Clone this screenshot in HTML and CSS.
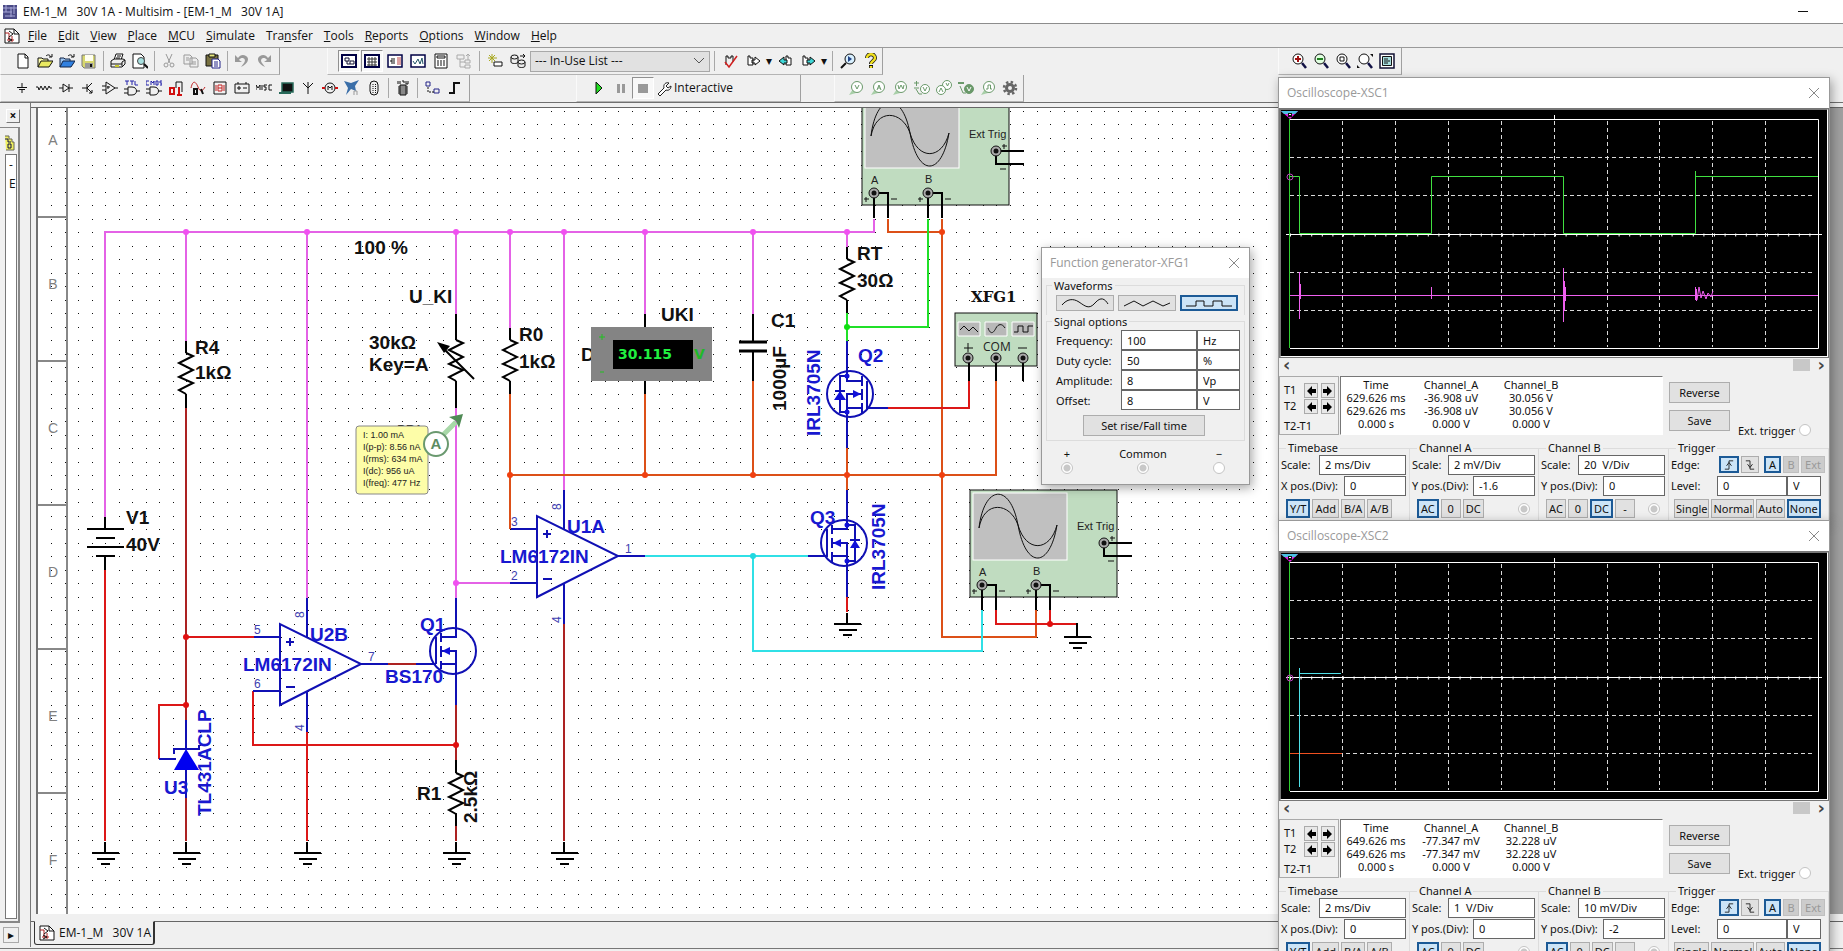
FILE: index.html
```html
<!DOCTYPE html>
<html lang="en">
<head>
<meta charset="utf-8">
<title>EM-1_M 30V 1A - Multisim</title>
<link rel="stylesheet" href="styles.css">
</head>
<body>
<svg class="defs" aria-hidden="true">
  <defs>
    <pattern id="dots" x="51" y="111" width="27" height="27" patternUnits="userSpaceOnUse"><path fill="#111" d="M0 0h1v1h-1zM14 0h1v1h-1zM0 13h1v1h-1zM14 13h1v1h-1z"/></pattern>
    <path id="res" d="M0 0l7 3-14 7 14 7-14 7 14 6-14 7 7 4"/>
    <path id="gnd" d="M0-11V0M-13 0h27M-8 6h18M-4 11h9"/>
    <g id="opamp">
      <path class="blue" d="M0-40V41L81 0ZM-26-27H0M-27 27H0M27-66V-27M27 27V68M81 0H108M6-22h8M10-26v8M6 23h9"/>
      <text class="pin" transform="translate(24 -46) rotate(-90)">8</text>
      <text class="pin" transform="translate(24 67) rotate(-90)">4</text>
    </g>
    <g id="jack"><circle r="5" fill="#aaa" stroke="#111"/><circle r="2.5" fill="#111"/></g>
    <g id="scopebox">
      <rect x="970" y="490" width="147" height="107" fill="#c0dcc0" stroke="#111"/>
      <rect x="973" y="493" width="94" height="67" fill="#c0c0c0" stroke="#fff"/>
      <path class="thin" d="M979 528C984 485 1010 482 1018 525C1026 570 1050 568 1057 525M979 528C984 500 1010 502 1018 525C1026 553 1050 552 1057 525"/>
      <text class="small" x="1077" y="530">Ext Trig</text><text class="small" x="979" y="576">A</text><text class="small" x="1033" y="575">B</text>
      <path class="blk" d="M1104 543H1132M1104 543V556H1132M982 585V610M982 585H996V610M1036 585V610M1036 585H1050V610"/>
      <path class="thin" d="M1110 538h5M1112 536v5M1108 561h6M972 591h5M974 589v5M999 591h6M1026 591h5M1028 589v5M1053 591h6"/>
      <use href="#jack" x="1104" y="543"/><use href="#jack" x="982" y="585"/><use href="#jack" x="1036" y="585"/>
    </g>
    <g id="graticule">
      <path class="dash" d="M63.500 12V238M116.500 12V238M169.500 12V238M222.500 12V238M275.500 12V238M328.500 12V238M380.500 12V238M433.500 12V238M486.500 12V238M11 48.500H536M11 86.500H536M11 163.500H536M11 201.500H536"/>
      <path stroke="#fff" fill="none" d="M11 10.500H539.500V239.500H11M7 125.500H543M275.500 6V11"/>
      <path stroke="#fff" stroke-width="3" stroke-dasharray="1 9.600" d="M11 126H539"/>
      <path d="M2 2H19L11 10Z" fill="#e020e0"/><path d="M2 2H19L16 5H5Z" fill="#4ac0e0"/><path d="M9 4h4v4h-4z" fill="#111"/><path d="M10 5h2v1h-2z" fill="#fff"/>
      <path d="M10.500 10V239" stroke="#30d030"/>
    </g>
    <path id="closex" d="M1 1L11 11M11 1L1 11"/>
    <g id="larr"><path d="M1 5L6 0V3H10V7H6V10Z"/></g>
    <g id="probe"><path d="M1 15L5 9 8 13Z" fill="#a8cfa8" stroke="none"/><circle cx="9" cy="7" r="5.500" fill="#fff"/></g>
  </defs>
</svg>

<header class="titlebar">
  <svg class="ic" viewBox="0 0 16 16"><path fill="#4a4a86" d="M1 1h14v14H1z"/><path stroke="#a8a8d8" d="M1 4h14M1 8h9M3 12h10M4 1v7M9 3v10M12 1v9"/></svg>
  <h1>EM-1_M   30V 1A - Multisim - [EM-1_M   30V 1A]</h1>
  <button class="minimize" aria-label="Minimize"></button>
</header>

<nav class="menu">
  <svg class="ic" viewBox="0 0 16 16"><path d="M1 1h9l5 5v9H1z" fill="#fff" stroke="#111"/><path d="M10 1v5h5" fill="none" stroke="#111"/><path d="M1 5h4v7h5M3 12h3M8 8v6" stroke="#b02020" fill="none"/><path d="M5 3l4 3-4 3M4 10l4 2-4 2" stroke="#111" fill="none"/></svg>
  <a href="#"><u>F</u>ile</a><a href="#"><u>E</u>dit</a><a href="#"><u>V</u>iew</a><a href="#"><u>P</u>lace</a><a href="#"><u>M</u>CU</a><a href="#"><u>S</u>imulate</a><a href="#">Tra<u>n</u>sfer</a><a href="#"><u>T</u>ools</a><a href="#"><u>R</u>eports</a><a href="#"><u>O</u>ptions</a><a href="#"><u>W</u>indow</a><a href="#"><u>H</u>elp</a>
</nav>

<div class="toolrow">
  <div class="group g-file">
    <button aria-label="New"><svg viewBox="0 0 16 16"><path d="M3 1h7l3 3v11H3z" fill="#fff" stroke="#111"/><path d="M10 1v4h3" fill="none" stroke="#111"/></svg></button>
    <button aria-label="Open"><svg viewBox="0 0 16 16"><path d="M1 14V5h4l1 1h5v3" fill="#ffffb0" stroke="#111"/><path d="M1 14l3-6h12l-4 6z" fill="#e8e860" stroke="#111"/><path d="M9 3c2-2 4-1 5 1M15 1v3h-3" fill="none" stroke="#111"/></svg></button>
    <button aria-label="Open samples"><svg viewBox="0 0 16 16"><path d="M1 14V5h4l1 1h5v3" fill="#9cc4f0" stroke="#124"/><path d="M1 14l3-6h12l-4 6z" fill="#3080e0" stroke="#124"/><path d="M9 3c2-2 4-1 5 1M15 1v3h-3" fill="none" stroke="#111"/></svg></button>
    <button aria-label="Save"><svg viewBox="0 0 16 16"><path d="M1 2h13v13H3l-2-2z" fill="#d8d870" stroke="#777"/><path d="M4 2h8v6H4z" fill="#fffff0"/><path d="M4 10h8v5H4z" fill="#999"/><path d="M9 11h2v3H9z" fill="#111"/></svg></button>
    <i></i>
    <button aria-label="Print"><svg viewBox="0 0 16 16"><path d="M4 7l2-6h7l-2 6" fill="#fff" stroke="#111"/><path d="M1 8l3-2h9l2 1v4l-3 3H1z" fill="#eee" stroke="#111"/><path d="M7 3h4M6 5h4M1 11h11M12 13V9l3-2" stroke="#111" fill="none"/><path d="M5 12h4v2H5z" fill="#c8c830"/></svg></button>
    <button aria-label="Print preview"><svg viewBox="0 0 16 16"><path d="M1 1h8l3 3v11H1z" fill="#fff" stroke="#111"/><circle cx="9" cy="8" r="3.500" fill="#a8e0e0" stroke="#444"/><path d="M12 11l4 4" stroke="#111" stroke-width="2"/></svg></button>
    <i></i>
    <button aria-label="Cut"><svg viewBox="0 0 16 16" fill="none" stroke="#999"><path d="M5 1l4 9M11 1L7 10"/><circle cx="5" cy="12" r="2"/><circle cx="11" cy="12" r="2"/></svg></button>
    <button aria-label="Copy"><svg viewBox="0 0 16 16" fill="#eee" stroke="#999"><path d="M1 2h6l2 2v7H1zM7 5h6l2 2v7H7z"/><path d="M3 5h3M3 7h3M9 9h4M9 11h4"/></svg></button>
    <button aria-label="Paste"><svg viewBox="0 0 16 16"><path d="M1 2h12v11H1z" fill="#777040" stroke="#111"/><path d="M4 1h6v3H4z" fill="#e8e880" stroke="#111"/><path d="M7 6h6l2 2v7H7z" fill="#fff" stroke="#228"/><path d="M9 9h4M9 11h4M9 13h4" stroke="#228"/></svg></button>
    <i></i>
    <button aria-label="Undo"><svg viewBox="0 0 16 16"><path d="M1 2v7h7L5 7c3-4 8-1 5 3l-3 4c7-3 9-9 5-11C9 1 6 2 4 5z" fill="#999"/></svg></button>
    <button aria-label="Redo"><svg viewBox="0 0 16 16"><path d="M15 2v7H8l3-2c-3-4-8-1-5 3l3 4C2 11 0 5 4 3c3-2 6-1 8 2z" fill="#999"/></svg></button>
  </div>
  <div class="group g-main">
    <button class="down" aria-label="Design toolbox"><svg viewBox="0 0 16 16"><path d="M1 2h14v12H1z" fill="#fff" stroke="#004" stroke-width="2"/><path d="M4 5h4v3H4zM9 8h4v3H9zM6 8v3h3" fill="none" stroke="#113"/></svg></button>
    <button class="down" aria-label="Spreadsheet"><svg viewBox="0 0 16 16"><path d="M1 2h14v12H1z" fill="#fff" stroke="#004" stroke-width="2"/><path d="M3 6h10M3 9h10M3 12h10M5 4v9M8 4v9M11 4v9" stroke="#333"/></svg></button>
    <button aria-label="Netlist"><svg viewBox="0 0 16 16"><path d="M1 2h14v12H1z" fill="#fff" stroke="#004" stroke-width="1.500"/><path d="M3 8h2M5 5v6M7 5v6" stroke="#111"/><path d="M10 5h4M10 7h4M10 9h4M10 11h4" stroke="#b44"/></svg></button>
    <button aria-label="Grapher"><svg viewBox="0 0 16 16"><path d="M1 2h14v12H1z" fill="#fff" stroke="#004" stroke-width="1.500"/><path d="M3 8l2 3 3-5 2 5 2-6 1 6" fill="none" stroke="#256"/></svg></button>
    <button aria-label="Postprocessor"><svg viewBox="0 0 16 16"><path d="M2 1h12v14H2z" fill="#fff" stroke="#111"/><path d="M4 3h8v2H4zM4 8h2M7 8h2M10 8h2M4 10h2M7 10h2M10 10h2M4 12h2M7 12h2M10 12h2" stroke="#111" fill="none"/></svg></button>
    <button aria-label="Parent sheet"><svg viewBox="0 0 16 16" fill="none" stroke="#aaa"><path d="M1 2h7v4H1zM9 7h5v3H9zM9 12h5v3H9zM4 6v8h5M4 9h5M12 7V1M10 3l2-2 2 2"/></svg></button>
    <i></i>
    <button aria-label="Create component"><svg viewBox="0 0 16 16"><path d="M7 9h8v4H7z" fill="#fff" stroke="#111"/><path d="M5 1v9M1 5h9M2 2l6 6M8 2L2 8" stroke="#a8a820"/></svg></button>
    <button aria-label="Database"><svg viewBox="0 0 16 16" fill="#eee" stroke="#111"><path d="M1 4v5c0 2 7 2 7 0V4"/><ellipse cx="4.500" cy="4" rx="3.500" ry="2"/><path d="M8 9v4c0 2 7 2 7 0V9"/><ellipse cx="11.500" cy="9" rx="3.500" ry="2"/><path d="M10 3h5M13 1l2 2-2 2"/></svg></button>
    <select aria-label="In-use list"><option>--- In-Use List ---</option></select>
    <i></i>
    <button aria-label="Electrical rules check"><svg viewBox="0 0 16 16" fill="none"><path d="M4 12V3h2v2h3V3h2v6" stroke="#111"/><path d="M3 9l4 5 8-11" stroke="#d02020" stroke-width="1.500"/></svg></button>
    <button aria-label="Transfer"><svg viewBox="0 0 16 16" fill="#fff" stroke="#111"><path d="M3 3h2v2h3v7H3zM7 7h3V4l5 4-5 4v-2H7z"/></svg></button>
    <b>▾</b>
    <button aria-label="Back annotate"><svg viewBox="0 0 16 16" stroke="#111"><path d="M9 3h2v2h3v7H9z" fill="#fff"/><path d="M10 7H7V4L2 8l5 4v-2h3z" fill="#40d8d8"/></svg></button>
    <button aria-label="Forward annotate"><svg viewBox="0 0 16 16" stroke="#111"><path d="M3 3h2v2h3v7H3z" fill="#fff"/><path d="M7 7h3V4l5 4-5 4v-2H7z" fill="#40d8d8"/></svg></button>
    <b>▾</b>
    <i></i>
    <button aria-label="Find examples"><svg viewBox="0 0 16 16"><circle cx="10" cy="6" r="5" fill="#d8f0ff" stroke="#111"/><path d="M6 10l-5 5" stroke="#111" stroke-width="2"/><path d="M8 3l4 3-4 3z" fill="#248"/></svg></button>
    <button aria-label="Help"><svg viewBox="0 0 16 16"><path d="M4 5c0-5 8-5 8 0 0 3-4 3-4 6M8 12v3" fill="none" stroke="#111" stroke-width="4"/><path d="M4 5c0-5 8-5 8 0 0 3-4 3-4 6M8 13v2" fill="none" stroke="#f0e020" stroke-width="2.500"/></svg></button>
  </div>
  <div class="group g-zoom">
    <button aria-label="Zoom in"><svg viewBox="0 0 16 16"><circle cx="7" cy="6" r="5" fill="#fff" stroke="#111"/><path d="M7 3v6M4 6h6" stroke="#a01010" stroke-width="2"/><path d="M11 10l4 5" stroke="#114" stroke-width="2.500"/></svg></button>
    <button aria-label="Zoom out"><svg viewBox="0 0 16 16"><circle cx="7" cy="6" r="5" fill="#e0ffe0" stroke="#111"/><path d="M4 6h6" stroke="#208020" stroke-width="2"/><path d="M11 10l4 5" stroke="#114" stroke-width="2.500"/></svg></button>
    <button aria-label="Zoom area"><svg viewBox="0 0 16 16"><circle cx="7" cy="6" r="5" fill="#fff" stroke="#111"/><path d="M5 4h4v4H5z" fill="none" stroke="#111"/><path d="M11 10l4 5" stroke="#114" stroke-width="2.500"/></svg></button>
    <button aria-label="Zoom sheet"><svg viewBox="0 0 16 16"><circle cx="7" cy="6" r="5" fill="#fff" stroke="#111"/><path d="M11 10l4 5" stroke="#114" stroke-width="2.500"/><path d="M13 1h3v3zM0 12v3h3z" fill="#111"/></svg></button>
    <button aria-label="Full screen"><svg viewBox="0 0 16 16"><path d="M1 1h14v14H1z" fill="#fff" stroke="#113" stroke-width="1.500"/><path d="M3.500 3.500h9v9h-9z" fill="#a8e0e0" stroke="#111"/><path d="M5 6h4M5 8h6M5 10h4" stroke="#111"/></svg></button>
  </div>
</div>
<div class="toolrow">
  <div class="group g-comp">
    <button aria-label="Source"><svg viewBox="0 0 16 16" stroke="#111"><path d="M8 3v4M3 7.500h10M5 9.500h6M8 10v3"/></svg></button>
    <button aria-label="Basic"><svg viewBox="0 0 16 16" fill="none" stroke="#111"><path d="M0 7h2l1 3 2-4 2 4 2-4 2 4 2-4 1 2h2"/></svg></button>
    <button aria-label="Diode"><svg viewBox="0 0 16 16" fill="none" stroke="#111"><path d="M1 8h4M5 4v8l6-4zM11 4v8M11 8h4"/></svg></button>
    <button aria-label="Transistor"><svg viewBox="0 0 16 16" fill="none" stroke="#111"><path d="M2 8h5M7 4v8M7 8l5-5M7 8l5 5M12 10v3h-3"/></svg></button>
    <button aria-label="Analog"><svg viewBox="0 0 16 16" fill="none" stroke="#111"><path d="M4 2v12l9-6zM0 6h4M0 10h4M13 8h3M6 6v3M5 7h3"/></svg></button>
    <button aria-label="TTL"><svg viewBox="0 0 16 16" fill="none" stroke="#111"><path d="M4 7v8h4c6 0 6-8 0-8zM0 9h4M0 13h4M13 11h3"/><path d="M1 1h4M3 1v4M6 1h4M8 1v4M11 1v4h3" stroke="#22a"/></svg></button>
    <button aria-label="CMOS"><svg viewBox="0 0 16 16" fill="none" stroke="#111"><path d="M4 7v8h4c6 0 6-8 0-8zM0 9h4M0 13h4M13 11h3"/><path d="M3 1H0v4h3M5 5V1l2 2 1-2v4M10 1h2v4h-2zM16 1h-2v2h2v2h-2" stroke="#22a"/></svg></button>
    <button aria-label="Misc digital"><svg viewBox="0 0 16 16" fill="none"><path d="M8 2h6v10M8 2v6" stroke="#111"/><path d="M2 8h4v6H2zM11 7v8M9 15h5" stroke="#d01010" stroke-width="2"/></svg></button>
    <button aria-label="Mixed"><svg viewBox="0 0 16 16" fill="none"><path d="M1 8c2-9 5-6 7-1s4 5 7 0" stroke="#c02020"/><path d="M4 9h3v5H4zM11 9l2 5" stroke="#111" stroke-width="2"/></svg></button>
    <button aria-label="Indicator"><svg viewBox="0 0 16 16" fill="none"><path d="M2 2h12v12H2z" stroke="#111"/><path d="M6 5h4v6H6zM6 8h4M4 5v6M12 5v6" stroke="#c02020"/></svg></button>
    <button aria-label="Power"><svg viewBox="0 0 16 16" fill="none" stroke="#111"><path d="M1 4h14v9H1zM4 4V2M12 4V2M3 8h4M9 8h4M5 6v4"/></svg></button>
    <button aria-label="Miscellaneous"><svg viewBox="0 0 16 16" fill="none" stroke="#111"><path d="M0 10V5l2 3 2-3v5M6 5v5M11 5H8v2h2v3H8M16 5h-3v5h3"/></svg></button>
    <button aria-label="Advanced peripherals"><svg viewBox="0 0 16 16"><path d="M4 3h11v9H4z" fill="#111" stroke="#286a5a" stroke-width="1.500"/><path d="M1 13h12" stroke="#286a5a" stroke-width="2"/></svg></button>
    <button aria-label="RF"><svg viewBox="0 0 16 16" fill="none" stroke="#111"><path d="M8 2v12M3 3l5 5 5-5"/></svg></button>
    <button aria-label="Electromechanical"><svg viewBox="0 0 16 16" fill="none" stroke="#111"><circle cx="8" cy="8" r="5"/><path d="M6 10V6l2 2 2-2v4"/><path d="M0 8h3M13 8h3" stroke="#d01010" stroke-width="2"/></svg></button>
    <button aria-label="NI component"><svg viewBox="0 0 16 16"><path d="M0 1l7 2 8-3-4 6 1 5-5-2-5 6 2-7z" fill="#3a6ea8"/><path d="M10 15v-4h3v4" fill="none" stroke="#999"/></svg></button>
    <button aria-label="Connector"><svg viewBox="0 0 16 16" fill="none" stroke="#111"><rect x="4" y="1" width="8" height="14" rx="4"/><path d="M7 4v9M9.500 4v9" stroke-dasharray="1 1"/></svg></button>
    <i></i>
    <button aria-label="MCU"><svg viewBox="0 0 16 16"><path d="M5 5h6v10H5z" fill="#888" stroke="#111"/><path d="M3 7h2M3 9h2M3 11h2M3 13h2M11 7h2M11 9h2M11 11h2M11 13h2M3 1v3M5 1v3M7 1h2v2M11 1v3h2V1" stroke="#111" fill="none"/></svg></button>
    <i></i>
    <button aria-label="Hierarchical block"><svg viewBox="0 0 16 16" fill="none" stroke="#228"><path d="M2 2h4v4H2zM10 9h5v4h-5z"/><path d="M4 7v5h6" stroke="#111" stroke-dasharray="2 1"/></svg></button>
    <button aria-label="Bus"><svg viewBox="0 0 16 16" fill="none" stroke="#111" stroke-width="2"><path d="M3 13h5V3h6"/></svg></button>
  </div>
  <div class="group g-sim">
    <button aria-label="Run"><svg viewBox="0 0 16 16"><path d="M5 2l6 6-6 6z" fill="#20e020" stroke="#111"/></svg></button>
    <button aria-label="Pause"><svg viewBox="0 0 16 16"><path d="M4 4h3v9H4zM9 4h3v9H9z" fill="#999"/></svg></button>
    <button class="down" aria-label="Stop"><svg viewBox="0 0 16 16"><path d="M3 4h10v9H3z" fill="#999"/></svg></button>
    <button class="wide"><svg viewBox="0 0 16 16"><path d="M2 14l6-6c-1-4 2-6 5-5l-3 3 2 2 3-2c0 3-2 5-5 4l-6 6z" fill="#fff" stroke="#222"/></svg>Interactive</button>
  </div>
  <div class="group g-probe">
    <button aria-label="Voltage probe"><svg class="pr" viewBox="0 0 16 16"><use href="#probe"/><path d="M7 5l2 4 2-4"/></svg></button>
    <button aria-label="Current probe"><svg class="pr" viewBox="0 0 16 16"><use href="#probe"/><path d="M7 10l2-5 2 5M8 8h2"/></svg></button>
    <button aria-label="Power probe"><svg class="pr" viewBox="0 0 16 16"><use href="#probe"/><path d="M6 5l1 4 2-4 2 4 1-4"/></svg></button>
    <button aria-label="Differential probe"><svg class="pr" viewBox="0 0 16 16"><path d="M0 3h5M2.500 1v5M0 8h5"/><circle cx="11" cy="9" r="4.500" fill="#fff"/><path d="M9 7l2 4 2-4M2 9l3 5h3"/></svg></button>
    <button aria-label="Voltage and current probe"><svg class="pr" viewBox="0 0 16 16"><circle cx="11" cy="5" r="4.500" fill="#fff"/><circle cx="5" cy="10" r="4.500" fill="#fff"/><path d="M3 12l2-4 2 4M10 3l1.500 3 1.500-3"/></svg></button>
    <button aria-label="Reference probe"><svg class="pr" viewBox="0 0 16 16"><path d="M0 3h6" stroke-width="2"/><circle cx="11" cy="9" r="4.500" fill="#6a996a"/><path d="M9 7l2 4 2-4" stroke="#fff"/><path d="M2 6l3 7h3"/></svg></button>
    <button aria-label="Digital probe"><svg class="pr" viewBox="0 0 16 16"><use href="#probe"/><path d="M6 9h2V5h2.500v4H12"/></svg></button>
    <button aria-label="Probe settings"><svg viewBox="0 0 16 16" fill="none" stroke="#666"><circle cx="8" cy="8" r="3.500" stroke-width="3"/><circle cx="8" cy="8" r="6" stroke-width="2.500" stroke-dasharray="2.400 2.300"/></svg></button>
  </div>
</div>

<main>
  <aside class="dock">
    <div class="dockhead"><button aria-label="Close toolbox">×</button></div>
    <div class="dockpane">
      <svg class="sheets" viewBox="0 0 10 18"><path d="M0 2h4v3h3v3h2v8H1" fill="#f0f060" stroke="#665"/><path d="M0 5h3v3h3M3 10v4h3v-4z" fill="none" stroke="#114"/></svg>
      <div class="tree"><span>-</span><span>E</span></div>
    </div>
    <button class="dockscroll" aria-label="Scroll right">▸</button>
  </aside>
  <section class="work">
    <div class="desk">
      <div class="sheet">
<svg class="schematic" role="img" aria-label="Schematic EM-1_M">
<g transform="translate(-38 -108)">
  <rect x="50" y="110" width="1222" height="806" fill="url(#dots)"/>
  <path class="rule" d="M67 100V920M38 217H67M38 361H67M38 505H67M38 649H67M38 793H67"/>
  <g class="zone"><text x="53" y="145">A</text><text x="53" y="289">B</text><text x="53" y="433">C</text><text x="53" y="577">D</text><text x="53" y="721">E</text><text x="53" y="865">F</text></g>

  <use href="#scopebox"/><use href="#scopebox" x="-108" y="-392"/>
  <path class="mag" d="M105 517V232H874V219M186 232V341M307 232V598M456 232V314M456 408V598M456 583H511M510 232V328M564 232V490M645 232V314M753 232V314M847 232V247"/>
  <path class="org" d="M510 394V529M510 475H996V381M645 394V475M753 381V475M847 448V490M888 219V232H942M942 219V637H1036V610"/>
  <path class="grn" d="M928 219V327H847M847 313V341"/>
  <path class="cyn" d="M645 556H808M753 556V651H982V610"/>
  <path class="drd" d="M186 408V720M186 798V841M564 624V841M388 664H416M456 705V760M456 826V841"/>
  <path class="red" d="M105 570V841M307 732V841M186 637H254M186 705H159V759M253 691V745H456M888 408H969V381M847 597V612M996 610V624H1077M1050 610V624"/>
  <path class="blk" d="M105 517V529M87 529H124M96 538H115M87 547H124M96 556H115M105 556V570M186 341V353M186 394V408M456 314V340M456 381V408M456 760V773M456 814V826M510 328V340M510 381V394M645 314V327M645 381V394M753 314V342M753 351V381M847 247V259M847 300V313M1077 623V627"/>
  <path class="blk cap" d="M739 342H767M739 351H767"/>
  <g class="blk"><use href="#res" x="186" y="353"/><use href="#res" x="456" y="340"/><use href="#res" x="510" y="340"/><use href="#res" x="847" y="259"/><use href="#res" x="456" y="773"/>
  <use href="#gnd" x="105" y="853"/><use href="#gnd" x="186" y="853"/><use href="#gnd" x="307" y="853"/><use href="#gnd" x="456" y="853"/><use href="#gnd" x="564" y="853"/><use href="#gnd" x="847" y="624"/><use href="#gnd" x="1077" y="637"/>
  <path d="M440 345L474 379"/></g><path d="M437 342l13 4-6 7z" fill="#000"/>

  <use href="#opamp" x="280" y="664"/><use href="#opamp" x="537" y="556"/>
  <path class="blue" d="M416 664H436M436 637V664M441 633V642M441 646V657M441 661V669M441 637H456V598M441 664H456M441 651H456V705"/>
  <circle class="blue" cx="453" cy="651" r="23"/><path class="bf" d="M442 651l8-4v8z"/>
  <path class="blue" d="M159 759H176M186 720V749M174 754V749H199V745M186 769V798"/><path d="M186 749l13 21h-25z" fill="#0000f0"/>
  <circle class="blue" cx="850" cy="394" r="23"/>
  <path class="blue" d="M847 341V381H862M847 376H840V412H847M835 391H845M862 376V386M862 389V400M862 403V413M867 381V408H888M862 394H847V448M862 408H847"/><path class="bf" d="M840 391l6 9h-12zM861 394l-8-4v8z"/>
  <circle class="blue" cx="844" cy="543" r="23"/>
  <path class="blue" d="M847 490V529H832M847 525H855V561H847M850 540H860M832 525V534M832 538V548M832 552V562M827 529V556H808M832 543H847V597M832 556H847"/><path class="bf" d="M855 540l5 8h-10zM833 543l8-4v8z"/>
  <g class="bf"><circle cx="847" cy="376" r="2.500"/><circle cx="847" cy="412" r="2.500"/><circle cx="847" cy="525" r="2.500"/><circle cx="847" cy="561" r="2.500"/></g>
  <g class="pin"><text x="254" y="634">5</text><text x="254" y="688">6</text><text x="368" y="661">7</text><text x="511" y="526">3</text><text x="511" y="580">2</text><text x="625" y="553">1</text></g>

  <g fill="#f050f0"><circle cx="186" cy="232" r="3"/><circle cx="307" cy="232" r="3"/><circle cx="456" cy="232" r="3"/><circle cx="510" cy="232" r="3"/><circle cx="564" cy="232" r="3"/><circle cx="645" cy="232" r="3"/><circle cx="753" cy="232" r="3"/><circle cx="847" cy="232" r="3"/><circle cx="456" cy="583" r="3"/></g>
  <g fill="#f04010"><circle cx="942" cy="232" r="3"/><circle cx="510" cy="475" r="3"/><circle cx="645" cy="475" r="3"/><circle cx="753" cy="475" r="3"/><circle cx="847" cy="475" r="3"/><circle cx="942" cy="475" r="3"/></g>
  <g fill="#e01010"><circle cx="186" cy="637" r="3"/><circle cx="186" cy="705" r="3"/><circle cx="456" cy="745" r="3"/><circle cx="1050" cy="624" r="3"/></g>
  <circle cx="847" cy="327" r="3" fill="#10e010"/><circle cx="753" cy="556" r="3" fill="#20d8e0"/>

  <g class="lbl">
    <text x="354" y="254">100 %</text><text x="409" y="303">U_KI</text><text x="369" y="349">30kΩ</text><text x="369" y="371">Key=A</text>
    <text x="195" y="354">R4</text><text x="195" y="379">1kΩ</text><text x="126" y="524">V1</text><text x="126" y="551">40V</text>
    <text x="519" y="341">R0</text><text x="519" y="368">1kΩ</text><text x="661" y="321">UKI</text><text x="581" y="361">D</text>
    <text x="771" y="327">C1</text><text transform="translate(786 411) rotate(-90)">1000µF</text>
    <text x="857" y="260">RT</text><text x="857" y="287">30Ω</text><text x="417" y="800">R1</text><text transform="translate(477 823) rotate(-90)">2.5kΩ</text>
    <text class="mono" x="971" y="302">XFG1</text>
  </g>
  <g class="lbl b">
    <text x="310" y="641">U2B</text><text x="243" y="671">LM6172IN</text><text x="420" y="631">Q1</text><text x="385" y="683">BS170</text>
    <text x="164" y="794">U3</text><text transform="translate(211 816) rotate(-90)">TL431ACLP</text>
    <text x="567" y="533">U1A</text><text x="500" y="563">LM6172IN</text><text x="858" y="362">Q2</text><text transform="translate(820 436) rotate(-90)">IRL3705N</text>
    <text x="810" y="524">Q3</text><text transform="translate(885 590) rotate(-90)">IRL3705N</text>
  </g>

  <rect x="591" y="327" width="121" height="54" fill="#848484"/><rect x="613" y="340" width="80" height="29" fill="#000"/>
  <text class="led" x="618" y="359">30.115</text><text class="led dim" x="694" y="359">V</text><path d="M599 337h6M602 334v6M600 372h4" stroke="#20c020"/>

  <rect x="955" y="313" width="82" height="53" fill="#c0dcc0" stroke="#111"/>
  <path d="M958 322h22v14h-22zM985 322h22v14h-22zM1012 322h22v14h-22z" fill="#b8b8b8" stroke="#fff"/>
  <path class="thin" d="M960 330l4-4 5 5 4-4 5 5M988 328c3 8 6 4 8 0s6-5 9 0M1014 332h4v-6h5v6h5v-6h5M964 348h9M968 343v9M1018 348h9"/>
  <text class="com" x="983" y="351">COM</text>
  <path class="blk" d="M969 358V381M996 358V381M1023 358V381"/>
  <use href="#jack" x="968" y="358"/><use href="#jack" x="996" y="358"/><use href="#jack" x="1023" y="358"/>

  <text x="397" y="434" font-size="13" font-family="Liberation Sans">PR1</text>
  <rect x="356" y="426" width="72" height="68" rx="3" fill="#fdfda8" stroke="#888"/>
  <g class="note"><text x="363" y="438">I: 1.00 mA</text><text x="363" y="450">I(p-p): 8.56 nA</text><text x="363" y="462">I(rms): 634 mA</text><text x="363" y="474">I(dc): 956 uA</text><text x="363" y="486">I(freq): 477 Hz</text></g>
  <path d="M443 435L456 422" stroke="#a8d8a8" stroke-width="5"/><path d="M449 417l14-3-4 14-3-7z" fill="#4f8a55"/>
  <circle cx="436" cy="444" r="12" fill="#fff" stroke="#6a996f" stroke-width="2"/><text x="436" y="449" class="amp">A</text>
</g>
</svg>
      </div>
      <div class="deskrest"></div>
    </div>
    <div class="tabs"><button><svg class="ic" viewBox="0 0 16 16"><path d="M1 1h9l5 5v9H1z" fill="#fff" stroke="#111"/><path d="M10 1v5h5" fill="none" stroke="#111"/><path d="M1 5h4v7h5M3 12h3M8 8v6" stroke="#b02020" fill="none"/><path d="M5 3l4 3-4 3M4 10l4 2-4 2" stroke="#111" fill="none"/></svg>EM-1_M   30V 1A</button></div>
  </section>
</main>
<footer></footer>

<section class="win fgen">
  <header><h2>Function generator-XFG1</h2><button class="x" aria-label="Close"><svg viewBox="0 0 12 12"><use href="#closex"/></svg></button></header>
  <div class="fbody">
    <fieldset><legend>Waveforms</legend>
      <div class="waves">
        <button aria-label="Sine"><svg viewBox="0 0 48 12"><path d="M1 8C6 2 12 1 18 5S28 13 34 6 44 2 47 7"/></svg></button>
        <button aria-label="Triangle"><svg viewBox="0 0 48 12"><path d="M1 9L11 4 20 9 30 4 40 9 47 6"/></svg></button>
        <button class="on" aria-label="Square"><svg viewBox="0 0 48 12"><path d="M1 9H11V4H19V9H28V4H37V9H47"/></svg></button>
      </div>
    </fieldset>
    <fieldset class="second"><legend>Signal options</legend>
      <div class="sig">
        <label for="fq">Frequency:</label><input id="fq" value="100"><input aria-label="Frequency unit" value="Hz">
        <label for="dc">Duty cycle:</label><input id="dc" value="50"><input aria-label="Duty unit" value="%">
        <label for="am">Amplitude:</label><input id="am" value="8"><input aria-label="Amplitude unit" value="Vp">
        <label for="of">Offset:</label><input id="of" value="8"><input aria-label="Offset unit" value="V">
      </div>
      <button class="rise">Set rise/Fall time</button>
    </fieldset>
    <div class="terms"><label>+<input type="radio" checked name="tp"></label><label>Common<input type="radio" checked name="tc"></label><label>−<input type="radio" name="tm"></label></div>
  </div>
</section>

<section class="win scope s1">
  <header><h2>Oscilloscope-XSC1</h2><button class="x" aria-label="Close"><svg viewBox="0 0 12 12"><use href="#closex"/></svg></button></header>
  <svg class="screen" viewBox="2 1 546 246" preserveAspectRatio="none">
    <use href="#graticule"/>
    <path fill="none" stroke="#40e040" d="M11 67.500H20.500V124.500H152.500V67.500H284.500V124.500H416.500V62M416 67.500H539"/>
    <path fill="none" stroke="#f060f0" d="M11 186.500H539M20.500 163V210M21.500 175V190M152.500 178V190M284.500 159V213M285.500 172V202M286.500 178V192M416.500 178V191M417.500 180V192M418 191l2-13 2 11 2-7 3 8 2-6 3 4 2-6"/>
    <circle cx="11" cy="68" r="3" fill="none" stroke="#c040c0"/>
  </svg>
  <div class="hscroll"><button aria-label="Left">‹</button><span></span><button aria-label="Right">›</button></div>
  <div class="readrow">
    <div class="cursors"><span>T1</span><button aria-label="T1 left"><svg viewBox="0 0 10 10"><use href="#larr"/></svg></button><button aria-label="T1 right"><svg class="flip" viewBox="0 0 10 10"><use href="#larr"/></svg></button><span>T2</span><button aria-label="T2 left"><svg viewBox="0 0 10 10"><use href="#larr"/></svg></button><button aria-label="T2 right"><svg class="flip" viewBox="0 0 10 10"><use href="#larr"/></svg></button><span class="diff">T2-T1</span></div>
    <div class="readout"><table><tr><th>Time</th><th>Channel_A</th><th>Channel_B</th></tr><tr><td>629.626 ms</td><td>-36.908 uV</td><td>30.056 V</td></tr><tr><td>629.626 ms</td><td>-36.908 uV</td><td>30.056 V</td></tr><tr><td>0.000 s</td><td>0.000 V</td><td>0.000 V</td></tr></table></div>
    <div class="acts"><button>Reverse</button><button>Save</button></div>
    <label class="ext">Ext. trigger<input type="radio" name="x1"></label>
  </div>
  <div class="panels">
    <fieldset><legend>Timebase</legend>
      <div class="fr"><label for="a1">Scale:</label><input id="a1" class="w87" value="2 ms/Div"></div>
      <div class="fr"><label for="a2">X pos.(Div):</label><input id="a2" class="w62" value="0"></div>
      <div class="bs"><button class="on">Y/T</button><button>Add</button><button>B/A</button><button>A/B</button></div></fieldset>
    <fieldset><legend>Channel A</legend>
      <div class="fr"><label for="a3">Scale:</label><input id="a3" class="w87" value="2 mV/Div"></div>
      <div class="fr"><label for="a4">Y pos.(Div):</label><input id="a4" class="w62" value="-1.6"></div>
      <div class="bs"><button class="on">AC</button><button>0</button><button>DC</button><input type="radio" checked name="ca1" aria-label="Channel A"></div></fieldset>
    <fieldset><legend>Channel B</legend>
      <div class="fr"><label for="a5">Scale:</label><input id="a5" class="w87" value="20  V/Div"></div>
      <div class="fr"><label for="a6">Y pos.(Div):</label><input id="a6" class="w62" value="0"></div>
      <div class="bs"><button>AC</button><button>0</button><button class="on">DC</button><button>-</button><input type="radio" checked name="cb1" aria-label="Channel B"></div></fieldset>
    <fieldset class="trig"><legend>Trigger</legend>
      <div class="fr edge"><span>Edge:</span><button class="on" aria-label="Rising"><svg viewBox="0 0 12 12"><path d="M1 11H6V1H11M3 7l3-4 3 4"/></svg></button><button aria-label="Falling"><svg viewBox="0 0 12 12"><path d="M1 1H6V11H11M3 5l3 4 3-4"/></svg></button><button class="on src">A</button><button class="off">B</button><button class="off">Ext</button></div>
      <div class="fr level"><label for="a7">Level:</label><input id="a7" value="0"><input aria-label="Level unit" value="V"></div>
      <div class="bs"><button>Single</button><button>Normal</button><button>Auto</button><button class="on">None</button></div></fieldset>
  </div>
</section>

<section class="win scope s2">
  <header><h2>Oscilloscope-XSC2</h2><button class="x" aria-label="Close"><svg viewBox="0 0 12 12"><use href="#closex"/></svg></button></header>
  <svg class="screen" viewBox="2 1 546 246" preserveAspectRatio="none">
    <use href="#graticule"/>
    <path fill="none" stroke="#f05020" d="M11 201.500H63M20.500 195V207"/>
    <path fill="none" stroke="#50e0e8" d="M20.500 116V235M20 121.500H62"/>
    <circle cx="11" cy="126" r="3" fill="none" stroke="#c040c0"/>
  </svg>
  <div class="hscroll"><button aria-label="Left">‹</button><span></span><button aria-label="Right">›</button></div>
  <div class="readrow">
    <div class="cursors"><span>T1</span><button aria-label="T1 left"><svg viewBox="0 0 10 10"><use href="#larr"/></svg></button><button aria-label="T1 right"><svg class="flip" viewBox="0 0 10 10"><use href="#larr"/></svg></button><span>T2</span><button aria-label="T2 left"><svg viewBox="0 0 10 10"><use href="#larr"/></svg></button><button aria-label="T2 right"><svg class="flip" viewBox="0 0 10 10"><use href="#larr"/></svg></button><span class="diff">T2-T1</span></div>
    <div class="readout"><table><tr><th>Time</th><th>Channel_A</th><th>Channel_B</th></tr><tr><td>649.626 ms</td><td>-77.347 mV</td><td>32.228 uV</td></tr><tr><td>649.626 ms</td><td>-77.347 mV</td><td>32.228 uV</td></tr><tr><td>0.000 s</td><td>0.000 V</td><td>0.000 V</td></tr></table></div>
    <div class="acts"><button>Reverse</button><button>Save</button></div>
    <label class="ext">Ext. trigger<input type="radio" name="x2"></label>
  </div>
  <div class="panels">
    <fieldset><legend>Timebase</legend>
      <div class="fr"><label for="b1">Scale:</label><input id="b1" class="w87" value="2 ms/Div"></div>
      <div class="fr"><label for="b2">X pos.(Div):</label><input id="b2" class="w62" value="0"></div>
      <div class="bs"><button class="on">Y/T</button><button>Add</button><button>B/A</button><button>A/B</button></div></fieldset>
    <fieldset><legend>Channel A</legend>
      <div class="fr"><label for="b3">Scale:</label><input id="b3" class="w87" value="1  V/Div"></div>
      <div class="fr"><label for="b4">Y pos.(Div):</label><input id="b4" class="w62" value="0"></div>
      <div class="bs"><button class="on">AC</button><button>0</button><button>DC</button><input type="radio" checked name="ca2" aria-label="Channel A"></div></fieldset>
    <fieldset><legend>Channel B</legend>
      <div class="fr"><label for="b5">Scale:</label><input id="b5" class="w87" value="10 mV/Div"></div>
      <div class="fr"><label for="b6">Y pos.(Div):</label><input id="b6" class="w62" value="-2"></div>
      <div class="bs"><button class="on">AC</button><button>0</button><button>DC</button><button>-</button><input type="radio" checked name="cb2" aria-label="Channel B"></div></fieldset>
    <fieldset class="trig"><legend>Trigger</legend>
      <div class="fr edge"><span>Edge:</span><button class="on" aria-label="Rising"><svg viewBox="0 0 12 12"><path d="M1 11H6V1H11M3 7l3-4 3 4"/></svg></button><button aria-label="Falling"><svg viewBox="0 0 12 12"><path d="M1 1H6V11H11M3 5l3 4 3-4"/></svg></button><button class="on src">A</button><button class="off">B</button><button class="off">Ext</button></div>
      <div class="fr level"><label for="b7">Level:</label><input id="b7" value="0"><input aria-label="Level unit" value="V"></div>
      <div class="bs"><button>Single</button><button>Normal</button><button>Auto</button><button class="on">None</button></div></fieldset>
  </div>
</section>
</body>
</html>
```

FILE: styles.css
```css
* { box-sizing: border-box; }
html, body { height: 100%; }
body {
  margin: 0; display: flex; flex-direction: column; overflow: hidden; position: relative;
  background: #f0f0f0; color: #111; font: 12px/16px "Open Sans", "Noto Sans", sans-serif;
}
button, input, select { font: inherit; color: inherit; margin: 0; padding: 0; border: 0; background: none; }
h1, h2 { margin: 0; font-size: 12px; font-weight: 400; }
fieldset { margin: 0; padding: 0; border: 0; min-width: 0; }
.defs { position: absolute; width: 0; height: 0; }
.ic { width: 16px; height: 16px; flex: none; }

.titlebar { height: 24px; flex: none; display: flex; align-items: center; gap: 5px; padding: 0 32px 0 2px; background: #fff; border-bottom: 1px solid #8c8c8c; }
.titlebar h1 { flex: 1; white-space: pre; }
.minimize { width: 16px; height: 16px; background: linear-gradient(#111, #111) center / 10px 1px no-repeat; }
.menu { height: 24px; flex: none; display: flex; align-items: center; gap: 11px; padding-left: 4px; border-bottom: 1px solid #9a9a9a; }
.menu .ic { margin-right: -3px; }
.menu a { color: inherit; text-decoration: none; }

.toolrow { height: 27px; flex: none; display: flex; }
.group { height: 27px; display: flex; align-items: center; border-right: 1px solid #a0a0a0; border-bottom: 1px solid #b4b4b4; border-left: 1px solid #fafafa; }
.group button { width: 22px; height: 22px; flex: none; display: flex; align-items: center; justify-content: center; }
.group svg { width: 16px; height: 16px; flex: none; }
.group i { width: 1px; height: 20px; margin: 0 3px; background: #a8a8a8; flex: none; }
.group b { font-size: 12px; font-weight: 400; width: 8px; text-align: center; flex: none; }
.group .down { border: 1px solid; border-color: #909090 #fff #fff #909090; background: #f8f8f8; }
.group select { appearance: none; width: 180px; height: 21px; padding-left: 4px; border: 1px solid #a8a8a8; background: #e1e1e1; background-image: linear-gradient(45deg, transparent 5px, #555 5px 6px, transparent 6px), linear-gradient(-45deg, transparent 5px, #555 5px 6px, transparent 6px); background-size: 6px 7px; background-position: right 10px center, right 4px center; background-repeat: no-repeat; }
.pr { fill: none; stroke: #6a996a; }
.g-file { width: 280px; padding-left: 11px; }
.g-main { width: 556px; margin-left: 47px; padding-left: 10px; gap: 1px; }
.g-zoom { width: 124px; margin-left: 395px; padding-left: 9px; }
.g-comp { width: 470px; padding-left: 10px; }
.g-sim { width: 225px; margin-left: 106px; padding-left: 11px; }
.g-sim .wide { width: auto; gap: 2px; margin-left: 2px; }
.g-probe { width: 190px; margin-left: 33px; padding-left: 10px; }

main { flex: 1; min-height: 0; display: flex; border-top: 1px solid #707070; }
.dock { width: 31px; flex: none; display: flex; flex-direction: column; border-right: 1px solid #777; margin-bottom: 1px; }
.dockhead { padding: 5px 0 0 6px; height: 24px; flex: none; }
.dockhead button { width: 14px; height: 14px; line-height: 12px; border: 1px solid; border-color: #fff #777 #777 #fff; font-weight: 700; }
.dockpane { flex: 1; min-height: 0; width: 20px; display: flex; flex-direction: column; border: 1px solid #888; border-width: 1px 2px 2px 0; padding: 6px 1px 2px 5px; }
.sheets { width: 10px; height: 18px; margin-bottom: 2px; flex: none; }
.tree { flex: 1; background: #fff; border: 1px solid #777; display: flex; flex-direction: column; gap: 3px; padding: 2px 3px; }
.dockscroll { width: 16px; height: 16px; margin: 4px 0 4px 3px; border: 1px solid #aaa; line-height: 14px; flex: none; }
.work { flex: 1; min-width: 0; display: flex; flex-direction: column; padding-top: 4px; }
.desk { flex: 1; min-height: 0; display: flex; border-top: 1px solid #666; padding-left: 5px; }
.sheet { flex: 1; min-width: 0; border-left: 2px solid #707070; background: #fff; overflow: hidden; }
.deskrest { width: 130px; flex: none; background: #a0a0a0; }
.schematic { display: block; width: 100%; height: 100%; fill: #000; }
.tabs { height: 27px; flex: none; margin-top: 7px; border-top: 1px solid #666; }
.tabs button { height: 24px; margin: -1px 0 0 3px; display: flex; align-items: center; gap: 4px; padding: 0 2px 0 4px; white-space: pre; background: #f0f0f0; border: 1px solid #333; border-top-color: #f0f0f0; border-right-width: 2px; border-radius: 0 0 3px 3px; }
footer { height: 3px; flex: none; border-top: 1px solid #777; }

.mag, .org, .grn, .cyn, .drd, .red, .blk, .blue { fill: none; stroke-width: 2; }
.mag { stroke: #e462e6; } .org { stroke: #dc5018; } .grn { stroke: #20e028; } .cyn { stroke: #30e0e6; }
.drd { stroke: #ac2222; } .red { stroke: #dc1818; } .blk { stroke: #000; } .blue { stroke: #1010b4; }
.cap { stroke-width: 3; }
.bf { fill: #1010d8; }
.thin { fill: none; stroke: #111; }
.rule { fill: none; stroke: #888; stroke-width: 2; }
.zone { font: 14px "Liberation Sans", sans-serif; fill: #808080; text-anchor: middle; }
.lbl { font: 700 19px "Liberation Sans", sans-serif; fill: #111; }
.b { fill: #1818d0; }
.mono { font: 700 15px "DejaVu Serif", serif; }
.pin { font: 12px "Liberation Sans", sans-serif; fill: #4040b0; }
.small { font: 11px "Liberation Sans", sans-serif; fill: #222; }
.com { font: 12px "Open Sans", sans-serif; fill: #222; }
.led { font: 700 14px "DejaVu Sans", sans-serif; fill: #20f040; }
.dim { fill: #20b828; }
.note { font: 9px "Liberation Sans", sans-serif; fill: #222; }
.amp { font: 700 15px "Liberation Sans", sans-serif; fill: #5c8c62; text-anchor: middle; }

.win { position: absolute; background: #f0f0f0; border: 1px solid #999; box-shadow: 2px 3px 10px rgba(0, 0, 0, .35); font: 11px/13px "Noto Sans", sans-serif; display: flex; flex-direction: column; }
.win header { height: 30px; flex: none; display: flex; align-items: center; justify-content: space-between; padding: 0 9px 0 8px; background: #fff; color: #999; }
.win h2 { font: 12px/16px "Open Sans", sans-serif; }
.x svg { display: block; width: 12px; height: 12px; stroke: #888; }
.win fieldset button, .acts button { background: #e1e1e1; border: 1px solid #adadad; text-align: center; flex: none; }
.win fieldset .on { background: #cce4f7; border: 2px solid #1c5a96; }
.win fieldset .off { background: #ccc; border-color: #bfbfbf; color: #999; }
.win input:not([type]) { min-width: 0; height: 20px; background: #fff; border: 1px solid #666; padding: 0 5px; }
input[type=radio] { appearance: none; width: 12px; height: 12px; flex: none; border: 1px solid #c4c4c4; border-radius: 50%; background: #fff; }
input[type=radio]:checked { background: radial-gradient(#c8c8c8 3px, #fff 4px); }
legend { padding: 0 2px; }

.fgen { left: 1041px; top: 247px; width: 209px; height: 238px; }
.fbody { flex: 1; padding: 1px 4px; }
.fbody fieldset { border: 1px solid #dcdcdc; border-bottom: 0; padding: 0 0 0 7px; }
.fbody legend { margin-left: -2px; }
.waves { display: flex; gap: 4px; padding: 3px 0 4px 2px; }
.waves button { width: 58px; height: 16px; display: flex; align-items: center; justify-content: center; }
.waves svg, .edge svg { fill: none; stroke: #111; }
.waves svg { width: 48px; height: 12px; }
.fbody .second { border-bottom: 1px solid #dcdcdc; padding-bottom: 4px; }
.sig { display: grid; grid-template-columns: 65px 76px 43px; padding: 2px 0 0 2px; align-items: center; }
.win .sig input { height: 20px; margin-bottom: 0; }
.fgen .rise { display: block; width: 122px; height: 21px; margin: 5px 0 0 29px; }
.terms { display: flex; justify-content: space-between; padding: 6px 20px 0 15px; }
.terms label { display: flex; flex-direction: column; align-items: center; gap: 2px; }

.scope { left: 1278px; width: 552px; }
.s1 { top: 77px; height: 445px; }
.s2 { top: 520px; height: 445px; }
.screen { width: 100%; height: 250px; flex: none; background: #000; border: 2px solid #888; border-color: #777 #fff #fff #777; outline: 1px solid #777; outline-offset: -1px; }
.dash { stroke: #d8d8d8; stroke-dasharray: 4 3; fill: none; }
.hscroll { height: 14px; flex: none; display: flex; align-items: center; padding: 0 4px; }
.hscroll button { font: 700 18px/12px "DejaVu Sans", sans-serif; color: #444; }
.hscroll span { width: 17px; height: 12px; background: #c8c8c8; margin: 0 8px 0 auto; }
.readrow { height: 59px; flex: none; display: flex; margin-top: 4px; }
.cursors { width: 60px; border: 1px solid #aaa; display: grid; grid-template-columns: 17px 14px 14px; column-gap: 3px; row-gap: 1px; padding: 6px 0 0 4px; align-content: start; }
.cursors button { height: 15px; border: 1px solid #aaa; background: #e8e8e8; display: flex; align-items: center; justify-content: center; }
.cursors svg { width: 10px; height: 10px; }
.flip { transform: scaleX(-1); }
.diff { grid-column: 1 / 4; margin-top: 4px; }
.readout { width: 323px; margin-left: 1px; background: #fff; border: 1px solid #777; border-right-color: #fff; border-bottom-color: #fff; padding-top: 1px; }
table { border-collapse: collapse; }
th, td { width: 80px; padding: 0; font-weight: 400; text-align: center; white-space: nowrap; }
tr > :first-child { width: 70px; }
.acts { width: 61px; margin-left: 6px; padding-top: 6px; display: flex; flex-direction: column; gap: 7px; }
.acts button { height: 21px; }
.ext { margin: 47px 0 0 8px; height: 14px; display: flex; align-items: center; gap: 4px; white-space: nowrap; }
.panels { display: grid; grid-template-columns: 131px 129px 130px 1fr; margin-top: 7px; }
.panels fieldset { border: 1px solid #dcdcdc; border-width: 1px 1px 0 0; padding-left: 2px; height: 78px; }
.panels legend { margin-left: 5px; height: 12px; line-height: 12px; }
.fr { display: flex; align-items: center; justify-content: space-between; height: 21px; padding-right: 3px; white-space: nowrap; }
.w87 { width: 87px; } .w62 { width: 62px; }
.bs { display: flex; gap: 2px; padding: 3px 0 0 5px; align-items: center; }
.win .bs button { height: 19px; padding: 0 2px; min-width: 20px; }
.bs input { margin: 0 8px 0 auto; }
.edge { justify-content: flex-start; gap: 2px; }
.edge span, .level label { width: 46px; }
.edge button { height: 17px; min-width: 16px; padding: 0 3px; }
.win .edge .src { margin-left: 3px; }
.edge svg { display: block; width: 10px; height: 12px; }
.level { justify-content: flex-start; }
.level input:nth-child(2) { width: 70px; }
.level input:nth-child(3) { width: 34px; }
.trig .bs { padding-left: 3px; }
.win .trig .bs button { padding: 0 1px; }
```
